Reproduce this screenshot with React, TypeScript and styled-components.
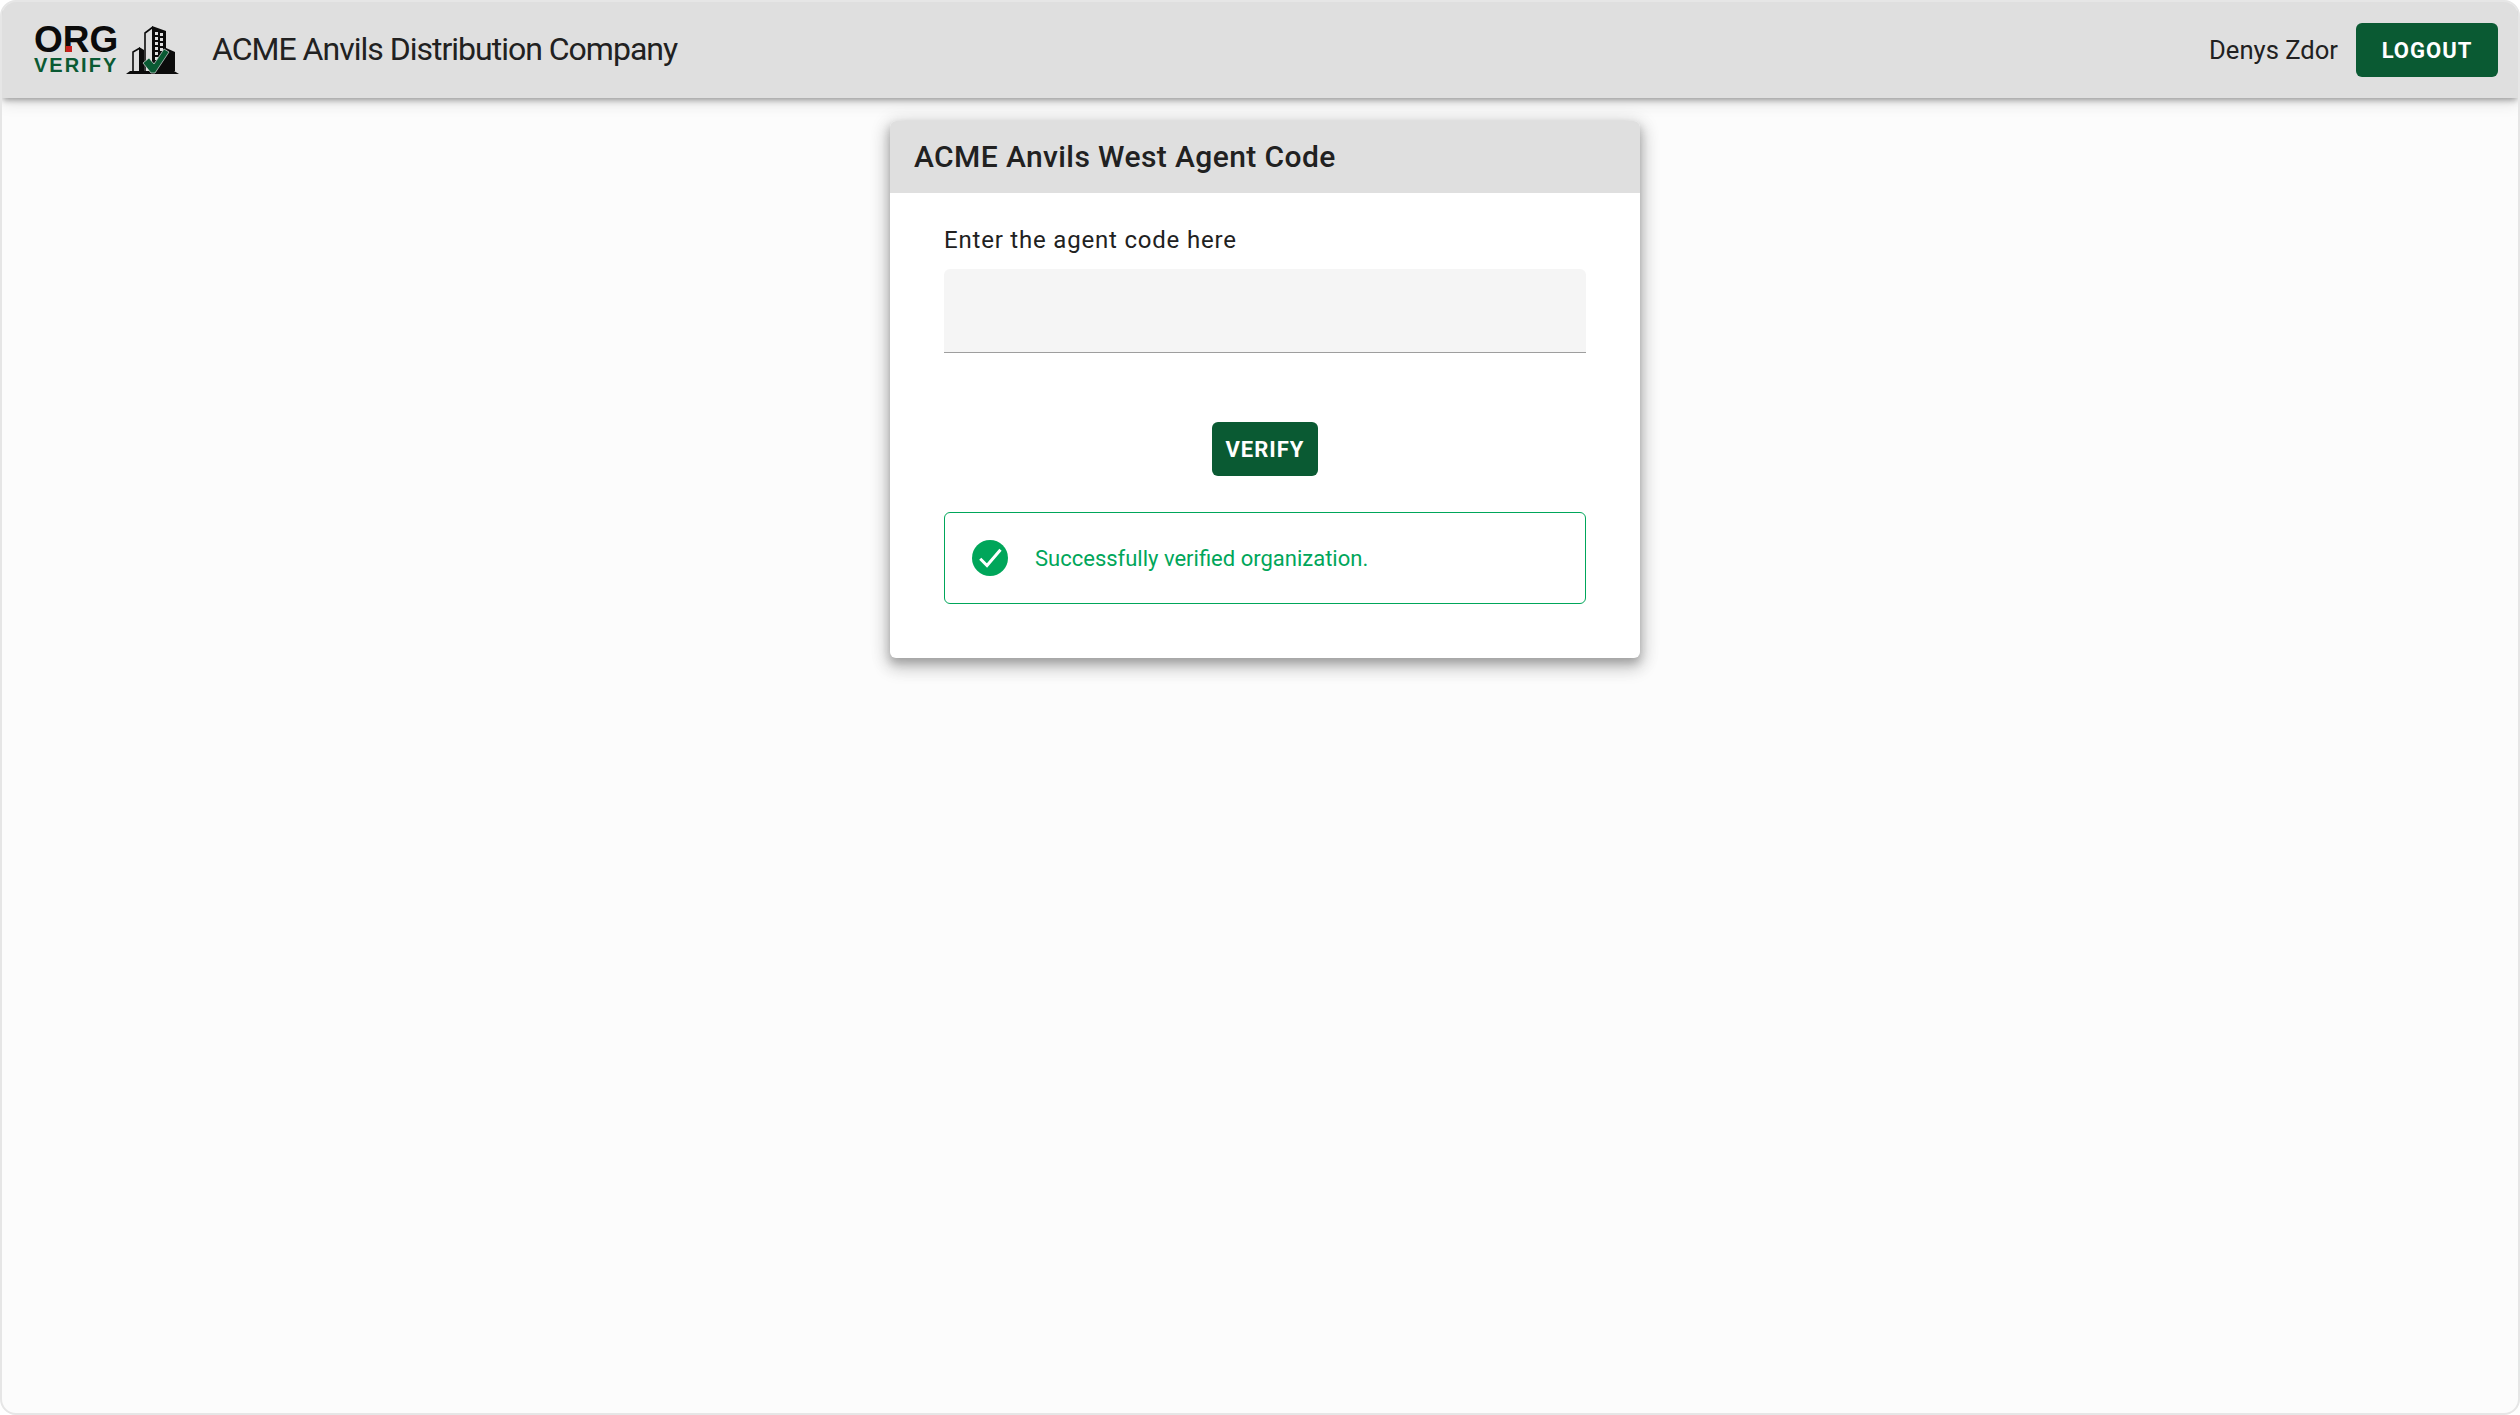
import styled, { createGlobalStyle } from 'styled-components';

const GlobalStyle = createGlobalStyle`
    html, body {
        margin: 0;
        padding: 0;
        background: #fff;
        font-family: Roboto, "Liberation Sans", sans-serif;
    }
    * {
        box-sizing: border-box;
    }
`;

const Page = styled.div`
    width: 2520px;
    height: 1415px;
    background: #fcfcfc;
    border: 2px solid #e6e6e6;
    border-radius: 16px;
    overflow: hidden;
`;

const AppBar = styled.header`
    height: 96px;
    background: #dfdfdf;
    display: flex;
    align-items: center;
    padding: 0 20px 0 32px;
    box-shadow: 0 3px 6px -1px rgba(0, 0, 0, 0.35), 0 6px 14px rgba(0, 0, 0, 0.1);
`;

const Logo = styled.div`
    display: flex;
    width: 148px;
    height: 60px;
    margin-top: 2px;
`;

const LogoWords = styled.div`
    display: flex;
    flex-direction: column;
    width: 87px;
    padding-top: 5px;
`;

const LogoOrg = styled.span`
    position: relative;
    font-family: "Liberation Sans", sans-serif;
    font-size: 37px;
    font-weight: 700;
    height: 32px;
    line-height: 27px;
    color: #0b0b0b;
`;

const LogoDot = styled.i`
    position: absolute;
    left: 32px;
    top: 20px;
    width: 6px;
    height: 6px;
    background: #c8201f;
`;

const LogoVerify = styled.span`
    font-family: "Liberation Sans", sans-serif;
    font-size: 20px;
    line-height: 14px;
    font-weight: 700;
    letter-spacing: 2px;
    color: #0a5a33;
`;

const CompanyName = styled.div`
    margin-left: 30px;
    margin-bottom: 2px;
    font-size: 32px;
    letter-spacing: -1px;
    color: #212121;
`;

const Spacer = styled.div`
    flex: 1;
`;

const UserName = styled.span`
    font-size: 25.6px;
    color: #212121;
    margin-right: 18px;
`;

const Button = styled.button`
    background: #0a5a33;
    color: #fff;
    border: 0;
    border-radius: 6px;
    height: 54px;
    font-family: inherit;
    font-size: 22px;
    font-weight: 700;
    letter-spacing: 1px;
    text-transform: uppercase;
`;

const LogoutButton = styled(Button)`
    width: 142px;
`;

const VerifyButton = styled(Button)`
    width: 106px;
    align-self: center;
    margin-top: 69px;
`;

const Main = styled.main`
    display: flex;
    justify-content: center;
    padding: 23px 0 0 10px;
`;

const Card = styled.section`
    width: 750px;
    background: #fff;
    border-radius: 6px;
    overflow: hidden;
    box-shadow: 0 5px 8px 0 rgba(0, 0, 0, 0.2), 0 8px 16px 4px rgba(0, 0, 0, 0.14), 0 3px 20px 2px rgba(0, 0, 0, 0.12);
`;

const CardTitle = styled.h2`
    margin: 0;
    height: 72px;
    background: #dfdfdf;
    padding: 0 24px 2px;
    display: flex;
    align-items: center;
    font-size: 30px;
    font-weight: 500;
    letter-spacing: 0.4px;
    color: #212121;
`;

const CardBody = styled.div`
    padding: 32px 54px 54px;
    display: flex;
    flex-direction: column;
`;

const FieldLabel = styled.label`
    font-size: 24px;
    line-height: 30px;
    letter-spacing: 0.8px;
    color: #212121;
    margin-bottom: 14px;
`;

const TextField = styled.input`
    height: 84px;
    background: #f5f5f5;
    border: 0;
    border-bottom: 1px solid #9e9e9e;
    border-radius: 6px 6px 0 0;
    outline: 0;
`;

const SuccessAlert = styled.div`
    margin-top: 36px;
    height: 92px;
    border: 1px solid #00a65a;
    border-radius: 6px;
    display: flex;
    align-items: center;
    padding: 0 27px;
    gap: 27px;
    color: #00a65a;
    font-size: 22px;
`;

const BuildingLogo = () => (
    <svg width="60" height="60" viewBox="0 0 60 60">
        <path fill="#0b0b0b" d="M5 53 L9 50 H53 L58 53 Z" />
        <path fill="none" stroke="#0b0b0b" strokeWidth="1.6" d="M24 50 V12 L32 6" />
        <path fill="#0b0b0b" d="M31 5 L45 10 V50 H31 Z" />
        <path
            fill="#dfdfdf"
            d="M34 11 h3 v3 h-3 Z M39 12 h3 v3 h-3 Z M34 16 h3 v3 h-3 Z M39 17 h3 v3 h-3 Z M34 21 h3 v3 h-3 Z M39 22 h3 v3 h-3 Z M34 26 h3 v3 h-3 Z M39 27 h3 v3 h-3 Z M34 31 h3 v3 h-3 Z M34 36 h3 v3 h-3 Z"
        />
        <path fill="none" stroke="#0b0b0b" strokeWidth="1.6" d="M12 50 V31 L19 27" />
        <path fill="#0b0b0b" d="M18 26 L23 29 V50 H18 Z" />
        <path fill="#0b0b0b" d="M45 27 L54 31 V50 H45 Z" />
        <path
            fill="#0a5a33"
            stroke="#dfdfdf"
            strokeWidth="0.7"
            d="M22 42 L28 37 L33 43 L43 28 L48 31 L34 52 H30 Z"
        />
    </svg>
);

const App = () => {
    return (
        <>
            <GlobalStyle />
            <Page>
                <AppBar>
                    <Logo>
                        <LogoWords>
                            <LogoOrg>
                                ORG
                                <LogoDot />
                            </LogoOrg>
                            <LogoVerify>VERIFY</LogoVerify>
                        </LogoWords>
                        <BuildingLogo />
                    </Logo>
                    <CompanyName>ACME Anvils Distribution Company</CompanyName>
                    <Spacer />
                    <UserName>Denys Zdor</UserName>
                    <LogoutButton>Logout</LogoutButton>
                </AppBar>
                <Main>
                    <Card>
                        <CardTitle>ACME Anvils West Agent Code</CardTitle>
                        <CardBody>
                            <FieldLabel>Enter the agent code here</FieldLabel>
                            <TextField />
                            <VerifyButton>Verify</VerifyButton>
                            <SuccessAlert>
                                <svg width="36" height="36" viewBox="0 0 24 24">
                                    <circle cx="12" cy="12" r="12" fill="#00a65a" />
                                    <path fill="none" stroke="#fff" strokeWidth="2" d="M5.5 12.5 L10 17 L19 6.5" />
                                </svg>
                                Successfully verified organization.
                            </SuccessAlert>
                        </CardBody>
                    </Card>
                </Main>
            </Page>
        </>
    );
};

export default App;
